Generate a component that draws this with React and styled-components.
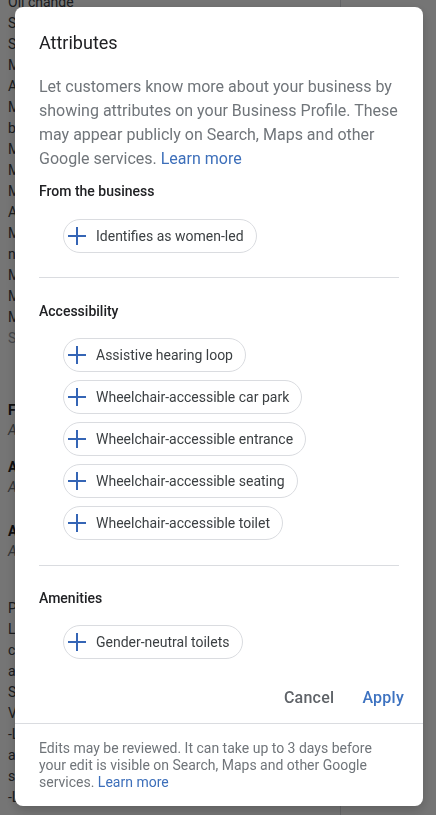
import React from "react";
import styled, { createGlobalStyle } from "styled-components";

const GlobalStyle = createGlobalStyle`
  * {
    box-sizing: border-box;
  }
  body {
    margin: 0;
    background: #fff;
    font-family: Roboto, "Liberation Sans", Arial, sans-serif;
    overflow: hidden;
  }
`;

const Page = styled.div`
  width: 341px;
  height: 815px;
  padding-left: 8px;
  border-right: 1px solid #dadce0;
  font-size: 14px;
  color: #3c4043;
  overflow: hidden;
`;

const ServiceList = styled.div`
  margin-top: -8px;
  line-height: 21px;
`;

const ServiceLine = styled.div`
  color: ${(p) => (p.$muted ? "#9aa0a6" : "#3c4043")};
`;

const InfoGroup = styled.div`
  margin-top: ${(p) => p.$gap}px;
  line-height: 20px;
`;

const InfoLabel = styled.div`
  font-weight: 700;
  color: #202124;
`;

const InfoValue = styled.div`
  font-style: italic;
  color: #70757a;
`;

const Paragraph = styled.div`
  margin-top: 37px;
  line-height: 21px;
  color: #3c4043;
`;

const Overlay = styled.div`
  position: fixed;
  inset: 0;
  background: rgba(0, 0, 0, 0.54);
  display: flex;
  align-items: flex-start;
  padding: 7px 0 0 15px;
`;

const Dialog = styled.div`
  width: 408px;
  background: #fff;
  border-radius: 8px;
  box-shadow: 0 4px 12px rgba(0, 0, 0, 0.2);
  display: flex;
  flex-direction: column;
`;

const Body = styled.div`
  padding: 24px 24px 0;
`;

const Title = styled.h2`
  margin: 0;
  font-size: 18px;
  font-weight: 400;
  line-height: 24px;
  color: #202124;
`;

const Description = styled.p`
  margin: 20px 0 0;
  font-size: 16px;
  line-height: 24px;
  color: #70757a;
`;

const Link = styled.a`
  color: #3d6fba;
  text-decoration: none;
  cursor: pointer;
`;

const Section = styled.div`
  padding: ${(p) => `${p.$top}px 0 ${p.$bottom}px`};
  border-top: ${(p) => (p.$first ? "none" : "1px solid #dadce0")};
`;

const SectionTitle = styled.div`
  font-size: 14px;
  font-weight: 500;
  line-height: 20px;
  color: #202124;
`;

const ChipList = styled.div`
  display: flex;
  flex-direction: column;
  align-items: flex-start;
  gap: 8px;
  margin-top: ${(p) => p.$gap}px;
  padding-left: 24px;
`;

const Chip = styled.button`
  display: inline-flex;
  align-items: center;
  gap: 10px;
  height: 34px;
  padding: 0 12px 0 4px;
  border: 1px solid #dadce0;
  border-radius: 17px;
  background: #fff;
  font-family: inherit;
  font-size: 14px;
  color: #3c4043;
  cursor: pointer;
`;

const Actions = styled.div`
  display: flex;
  justify-content: flex-end;
  gap: 12px;
  margin-top: 20px;
  padding: 0 11px 8px 24px;
`;

const TextButton = styled.button`
  height: 36px;
  padding: 0 8px;
  border: none;
  background: none;
  font-family: inherit;
  font-size: 16px;
  font-weight: 500;
  letter-spacing: 0.25px;
  color: ${(p) => (p.$primary ? "#3d72c0" : "#5f6368")};
  cursor: pointer;
`;

const Footer = styled.div`
  border-top: 1px solid #dadce0;
  padding: 16px 24px 15px;
  font-size: 14px;
  line-height: 17px;
  color: #70757a;
`;

const PlusIcon = () => (
  <svg width="18" height="18" viewBox="0 0 18 18" aria-hidden="true">
    <path d="M9 0v18M0 9h18" stroke="#3565b5" strokeWidth="2" fill="none" />
  </svg>
);

const services = [
  "Oil change",
  "Smog check",
  "Suspension repair",
  "Muffler repair",
  "Air conditioning",
  "Mobile mechanic",
  "brake repair",
  "Maintenance",
  "Motor tune-up",
  "Mechanical repair",
  "Auto detailing",
  "Manufacturer warranty",
  "new tyres",
  "MOT test",
  "Motorcycle repair",
  "Mirror repair",
];

const info = [
  { label: "From the business", value: "Add attributes", gap: 51 },
  { label: "Accessibility", value: "Add attributes", gap: 17 },
  { label: "Amenities", value: "Add attributes", gap: 24 },
];

const about = [
  "Professional car care",
  "Local garage in the centre of town",
  "car servicing and repairs",
  "all makes and models",
  "Same-day service available",
  "Visit us today",
  "-Loan cars available",
  "and friendly staff",
  "services include",
  "-Local pickup",
];

// padding above the title and below the last chip of each section
const sections = [
  { title: "From the business", items: ["Identifies as women-led"], top: 10, bottom: 24, gap: 18 },
  {
    title: "Accessibility",
    items: [
      "Assistive hearing loop",
      "Wheelchair-accessible car park",
      "Wheelchair-accessible entrance",
      "Wheelchair-accessible seating",
      "Wheelchair-accessible toilet",
    ],
    top: 23,
    bottom: 25,
    gap: 17,
  },
  { title: "Amenities", items: ["Gender-neutral toilets"], top: 22, bottom: 0, gap: 17 },
];

export default function App() {
  return (
    <>
      <GlobalStyle />
      <Page>
        <ServiceList>
          {services.map((s) => (
            <ServiceLine key={s}>{s}</ServiceLine>
          ))}
          <ServiceLine $muted>See more</ServiceLine>
        </ServiceList>
        {info.map((i) => (
          <InfoGroup key={i.label} $gap={i.gap}>
            <InfoLabel>{i.label}</InfoLabel>
            <InfoValue>{i.value}</InfoValue>
          </InfoGroup>
        ))}
        <Paragraph>
          {about.map((a) => (
            <div key={a}>{a}</div>
          ))}
        </Paragraph>
      </Page>

      <Overlay>
        <Dialog role="dialog" aria-label="Attributes">
          <Body>
            <Title>Attributes</Title>
            <Description>
              Let customers know more about your business by showing attributes
              on your Business Profile. These may appear publicly on Search,
              Maps and other Google services. <Link>Learn more</Link>
            </Description>
            {sections.map((section, idx) => (
              <Section
                key={section.title}
                $first={idx === 0}
                $top={section.top}
                $bottom={section.bottom}
              >
                <SectionTitle>{section.title}</SectionTitle>
                <ChipList $gap={section.gap}>
                  {section.items.map((item) => (
                    <Chip key={item}>
                      <PlusIcon />
                      {item}
                    </Chip>
                  ))}
                </ChipList>
              </Section>
            ))}
          </Body>
          <Actions>
            <TextButton>Cancel</TextButton>
            <TextButton $primary>Apply</TextButton>
          </Actions>
          <Footer>
            Edits may be reviewed. It can take up to 3 days before your edit is
            visible on Search, Maps and other Google services.{" "}
            <Link>Learn more</Link>
          </Footer>
        </Dialog>
      </Overlay>
    </>
  );
}
